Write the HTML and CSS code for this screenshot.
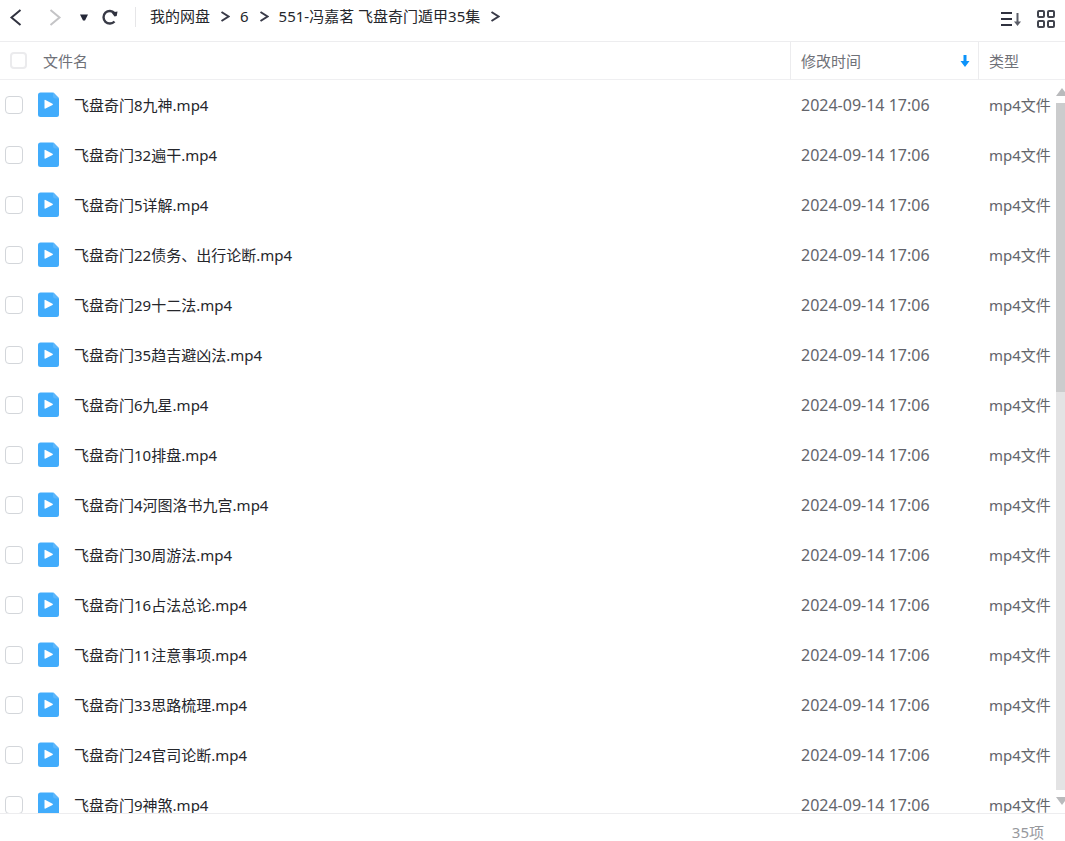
FILE: index.html
```html
<!DOCTYPE html>
<html lang="zh-CN">

<head>
    <meta charset="UTF-8">
    <meta name="viewport" content="width=device-width, initial-scale=1.0">
    <title>我的网盘</title>
    <link rel="stylesheet" href="styles.css">
</head>

<body>
    <header class="toolbar">
        <div class="nav-buttons">
            <button class="icon-button" type="button" aria-label="后退">
                <svg width="14" height="20" viewBox="0 0 14 20"><path d="M11.500 3L2.500 10.500l9 7.500" fill="none" stroke="#30323f" stroke-width="2"/></svg>
            </button>
            <button class="icon-button forward" type="button" aria-label="前进" disabled>
                <svg width="14" height="20" viewBox="0 0 14 20"><path d="M2.500 3L11.500 10.500l-9 7.500" fill="none" stroke="#c4c4c6" stroke-width="2"/></svg>
            </button>
            <button class="icon-button history" type="button" aria-label="历史">
                <svg width="10" height="20" viewBox="0 0 10 20"><path d="M1 7.500h8L6 13.500H4z" fill="#252838"/></svg>
            </button>
            <button class="icon-button refresh" type="button" aria-label="刷新">
                <svg width="18" height="20" viewBox="0 0 18 20">
                    <path d="M13.500 14.500A6.300 6.300 0 1 1 13.500 6" fill="none" stroke="#383a46" stroke-width="2.400"/>
                    <path d="M10.500 5.500l6-1-.8 4.600-2.200.4z" fill="#30323f"/>
                </svg>
            </button>
        </div>
        <nav class="breadcrumb">
            <a href="#">我的网盘</a>
            <svg width="10" height="12" viewBox="0 0 10 12"><path d="M1.500 2L8.500 6.500l-7 4.500"/></svg>
            <a href="#">6</a>
            <svg width="10" height="12" viewBox="0 0 10 12"><path d="M1.500 2L8.500 6.500l-7 4.500"/></svg>
            <a href="#">551-冯嘉茗 飞盘奇门遁甲35集</a>
            <svg width="10" height="12" viewBox="0 0 10 12"><path d="M1.500 2L8.500 6.500l-7 4.500"/></svg>
        </nav>
        <div class="view-buttons">
            <button class="icon-button" type="button" aria-label="排序">
                <svg width="20" height="16" viewBox="0 0 20 16">
                    <path d="M0 2h11M0 8h11M0 14h11" stroke="#30323f" stroke-width="2"/>
                    <path d="M16.500 2v11" stroke="#5b5e68" stroke-width="2"/>
                    <path d="M13 10.500h7L16.500 15z" fill="#5b5e68"/>
                </svg>
            </button>
            <button class="icon-button" type="button" aria-label="网格视图">
                <svg width="18" height="18" viewBox="0 0 18 18" fill="none" stroke="#41444e" stroke-width="2">
                    <rect x="1" y="1" width="6" height="6" rx="1"/>
                    <rect x="11" y="1" width="6" height="6" rx="1"/>
                    <rect x="1" y="11" width="6" height="6" rx="1"/>
                    <rect x="11" y="11" width="6" height="6" rx="1"/>
                </svg>
            </button>
        </div>
    </header>

    <main class="file-list">
        <table>
            <thead>
                <tr>
                    <th class="col-name">
                        <div class="name-head">
                            <input type="checkbox" id="checkAll" aria-label="全选">
                            <label for="checkAll">文件名</label>
                        </div>
                    </th>
                    <th class="col-time">
                        <div class="time-head">
                            <span>修改时间</span>
                            <svg width="10" height="14" viewBox="0 0 10 14"><path d="M3.500 1h3v6H9.500L5 13 .5 7h3z" fill="#0c93fa"/></svg>
                        </div>
                    </th>
                    <th class="col-type">类型</th>
                </tr>
            </thead>
            <tbody id="fileRows"></tbody>
        </table>
        <div class="scrollbar">
            <div class="arrow-up"></div>
            <div class="track">
                <div class="thumb"></div>
            </div>
            <div class="arrow-down"></div>
        </div>
    </main>

    <footer class="status-bar">35项</footer>

    <script>
        const files = [
            '飞盘奇门8九神.mp4',
            '飞盘奇门32遍干.mp4',
            '飞盘奇门5详解.mp4',
            '飞盘奇门22债务、出行论断.mp4',
            '飞盘奇门29十二法.mp4',
            '飞盘奇门35趋吉避凶法.mp4',
            '飞盘奇门6九星.mp4',
            '飞盘奇门10排盘.mp4',
            '飞盘奇门4河图洛书九宫.mp4',
            '飞盘奇门30周游法.mp4',
            '飞盘奇门16占法总论.mp4',
            '飞盘奇门11注意事项.mp4',
            '飞盘奇门33思路梳理.mp4',
            '飞盘奇门24官司论断.mp4',
            '飞盘奇门9神煞.mp4'
        ];

        document.getElementById('fileRows').innerHTML = files.map((name, i) => `
            <tr>
                <td>
                    <div class="name-cell">
                        <input type="checkbox" id="file${i}">
                        <svg class="file-icon" width="21" height="26" viewBox="0 0 21 26">
                            <path d="M2.500 .5H14.500q1 0 1.600.7L20.300 5.500q.7.700.7 1.700v15.300a2.500 2.500 0 0 1-2.500 2.500h-16A2.500 2.500 0 0 1 0 22.500V3A2.500 2.500 0 0 1 2.500 .5z" fill="#41acfc"/>
                            <path d="M15 .6q.6.100 1.100.6L20.300 5.500q.5.500.6 1H17.500A2.500 2.500 0 0 1 15 4z" fill="#5cb6fa"/>
                            <path d="M6.500 8.500v7.600q0 1 1 .5l7-3.600q1-.7 0-1.300L7.500 8q-1-.5-1 .5z" fill="#fff"/>
                        </svg>
                        <label for="file${i}">${name}</label>
                    </div>
                </td>
                <td class="time">2024-09-14 17:06</td>
                <td class="type">mp4文件</td>
            </tr>
        `).join('');
    </script>
</body>

</html>
```

FILE: styles.css
```css
* {
    box-sizing: border-box;
}

body {
    display: flex;
    flex-direction: column;
    height: 100vh;
    margin: 0;
    overflow: hidden;
    background-color: white;
    color: #25262b;
    font-family: "Noto Sans", "Noto Sans CJK SC", sans-serif;
    font-size: 15px;
    line-height: 20px;
}

svg {
    display: block;
    flex-shrink: 0;
}

.toolbar {
    display: flex;
    align-items: flex-start;
    flex-shrink: 0;
    height: 42px;
    padding: 7px 10px 0 9px;
    border-bottom: 1px solid #ededef;
}

.icon-button {
    padding: 0;
    border: none;
    background: none;
}

.nav-buttons {
    display: flex;
    padding-right: 16px;
    border-right: 1px solid #e6e6e8;
}

.forward {
    margin-left: 25px;
}

.history {
    margin-left: 17px;
}

.refresh {
    margin-left: 12px;
}

.breadcrumb {
    display: flex;
    align-items: center;
    flex: 1;
    gap: 10px;
    padding-left: 14px;
    line-height: 18px;
}

.breadcrumb a {
    color: #25262b;
    text-decoration: none;
}

.breadcrumb path {
    fill: none;
    stroke: #383a48;
    stroke-width: 2;
}

.view-buttons {
    display: flex;
    align-items: center;
    gap: 16px;
    padding-top: 3px;
}

.file-list {
    position: relative;
    flex: 1;
    min-height: 0;
    overflow: hidden;
}

table {
    width: 100%;
    border-collapse: separate;
    border-spacing: 0;
    table-layout: fixed;
}

th {
    height: 38px;
    padding: 0 8px 0 10px;
    border-bottom: 1px solid #efeff1;
    color: #6f7178;
    font-weight: normal;
    text-align: left;
}

th + th {
    border-left: 1px solid #ececee;
}

.col-time {
    width: 188px;
}

.col-type {
    width: 87px;
}

.name-head {
    display: flex;
    align-items: center;
    gap: 16px;
}

.time-head {
    display: flex;
    align-items: center;
    justify-content: space-between;
}

td {
    height: 50px;
    padding: 0 0 0 11px;
    color: #63656b;
    white-space: nowrap;
}

td:first-child {
    padding-left: 5px;
    color: #25262b;
}

.name-cell {
    display: flex;
    align-items: center;
}

.time {
    font-size: 16px;
}

input[type="checkbox"] {
    appearance: none;
    flex-shrink: 0;
    width: 18px;
    height: 18px;
    margin: 0;
    border: 1px solid #d3d6da;
    border-radius: 4px;
    background-color: white;
}

.name-head input[type="checkbox"] {
    width: 17px;
    height: 17px;
    border: 2px solid #ebebed;
}

.file-icon {
    margin: 0 15px;
}

.scrollbar {
    position: absolute;
    top: 46px;
    right: 0;
    bottom: 8px;
    display: flex;
    flex-direction: column;
    gap: 7px;
    width: 9px;
}

.arrow-up,
.arrow-down {
    width: 12px;
    height: 8px;
    background-color: #b9babc;
    clip-path: polygon(50% 0, 100% 100%, 0 100%);
}

.arrow-down {
    clip-path: polygon(0 0, 100% 0, 50% 100%);
}

.track {
    flex: 1;
    background-color: #e3e3e4;
}

.thumb {
    height: 42%;
    background-color: #cbcccd;
}

.status-bar {
    flex-shrink: 0;
    height: 28px;
    padding: 9px 21px 0 0;
    border-top: 1px solid #ededef;
    color: #97989d;
    line-height: 18px;
    text-align: right;
}
```
